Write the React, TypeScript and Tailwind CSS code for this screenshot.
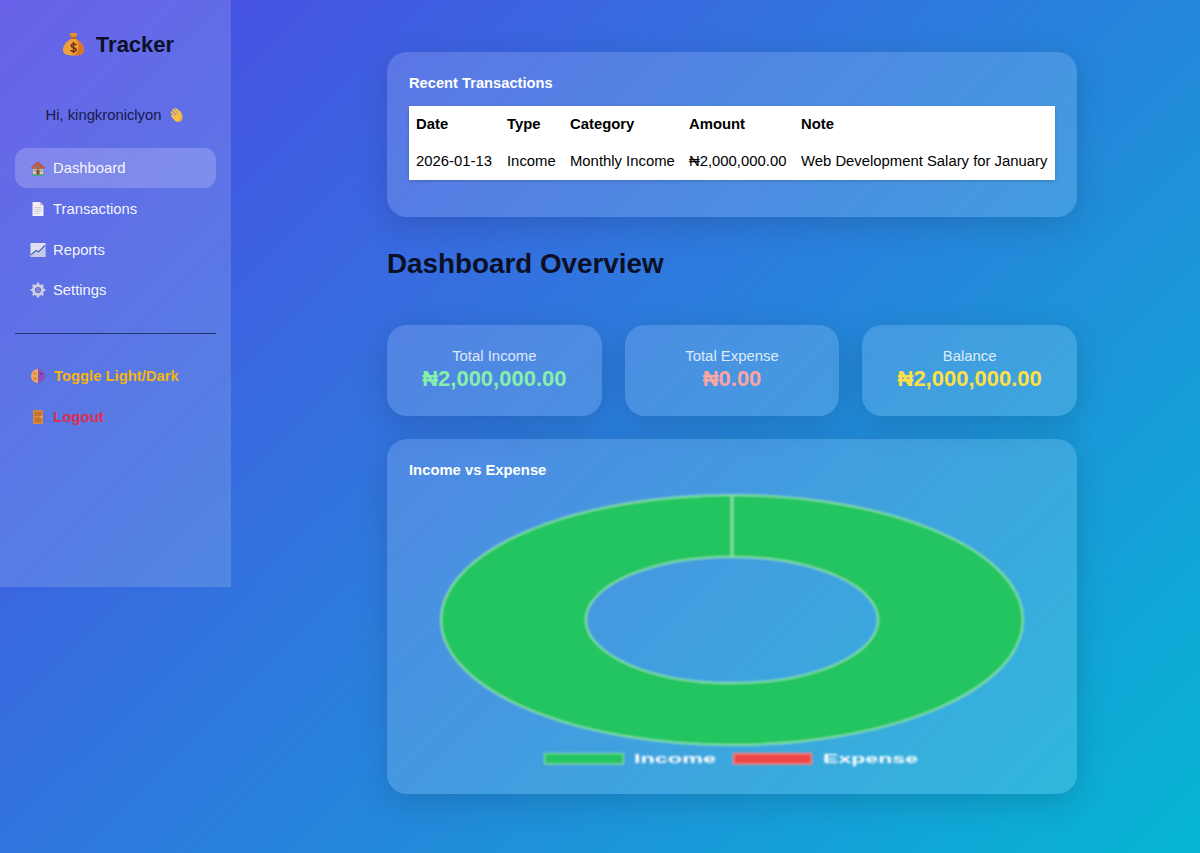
import React from "react";

const Bag = () => (
  <svg width="23" height="24" viewBox="2.4 1.6 19.2 20.8">
    <path d="M8.5 2.5 L15.5 2.5 L13.8 6.5 L10.2 6.5 Z" fill="#e8902c" />
    <rect x="9.6" y="6" width="4.8" height="1.8" rx=".9" fill="#a8591c" />
    <path d="M10 7.5 C5.5 10 2.8 14 2.8 17.2 C2.8 20.6 6 22 12 22 C18 22 21.2 20.6 21.2 17.2 C21.2 14 18.5 10 14 7.5 Z" fill="#f0a03a" />
    <path d="M14 7.5 C18.5 10 21.2 14 21.2 17.2 C21.2 20.6 18 22 12 22 C17 20 17.5 12 14 7.5Z" fill="#d9752b" />
    <path d="M14.2 12.6 C13.4 11.8 10 11.6 10 13.6 C10 15.8 14.3 14.6 14.3 16.9 C14.3 18.8 10.8 18.7 9.8 17.7 M12 10.8 V19.6" stroke="#6b3410" strokeWidth="1.3" fill="none" strokeLinecap="round" />
  </svg>
);
const Wave = () => (
  <svg width="16" height="16" viewBox="0 0 16 16">
    <path d="M2.6 5.2 L6.6 9.4 M4.2 2.8 L8.6 7.6 M6.6 1.7 L10.6 6.6" stroke="#f7c04a" strokeWidth="2" fill="none" strokeLinecap="round" />
    <path d="M9.6 2.6 C11 3.6 12.2 5.6 13 7.6 C14.2 10.6 13.4 13 11.4 14.2 C9.2 15.6 6.8 14.8 5.2 13 L2.4 9.4 C1.6 8.4 3 7.2 4 8.2 L5.6 9.8 L9.8 6 Z" fill="#f7c04a" />
    <path d="M9.2 13.8 C11.4 13.6 12.8 11.6 12.4 9" stroke="#e09a2c" strokeWidth="1" fill="none" />
  </svg>
);
const House = () => (
  <svg width="16" height="16" viewBox="0 0 16 16">
    <path d="M3 7 H13 V14.5 H3 Z" fill="#e8c9a0" />
    <path d="M8 1.2 L15.5 8 L13.8 8.6 L8 3.8 L2.2 8.6 L.5 8 Z" fill="#c4503c" />
    <path d="M8 3.8 L13 8 V9 H3 V8 Z" fill="#a9684a" />
    <rect x="6.4" y="9.5" width="3.2" height="5" fill="#8a4a2c" />
    <rect x="3.8" y="9.7" width="1.9" height="2" fill="#5fa8d8" />
    <rect x="10.3" y="9.7" width="1.9" height="2" fill="#5fa8d8" />
    <rect x="1.5" y="14.3" width="13" height="1.3" fill="#3fa66a" />
  </svg>
);
const Doc = () => (
  <svg width="16" height="16" viewBox="0 0 16 16">
    <path d="M2.5 1 H10 L13.5 4.5 V15 H2.5 Z" fill="#f1eff5" />
    <path d="M10 1 L13.5 4.5 H10 Z" fill="#c9c4d2" />
    <path d="M4.5 6.5 H11.5 M4.5 8.5 H11.5 M4.5 10.5 H11.5 M4.5 12.5 H9" stroke="#c9c4d4" strokeWidth=".9" />
  </svg>
);
const Chart = () => (
  <svg width="16" height="16" viewBox="0 0 16 16">
    <rect x=".5" y="1" width="15" height="14" fill="#dfe0ee" />
    <path d="M1 13 L6 8.5 L8.5 10 L15 3.5" stroke="#3f62b8" strokeWidth="1.3" fill="none" />
    <path d="M1 14.5 L6 10 L8.5 11.5 L15 5 V15 H1 Z" fill="#c6c9e2" />
  </svg>
);
const Gear = () => (
  <svg width="16" height="16" viewBox="0 0 16 16">
    <circle cx="8" cy="8" r="4.6" fill="none" stroke="#cfcde0" strokeWidth="3" />
    <path d="M8 .6 V2.6 M8 13.4 V15.4 M.6 8 H2.6 M13.4 8 H15.4 M2.8 2.8 L4.2 4.2 M11.8 11.8 L13.2 13.2 M13.2 2.8 L11.8 4.2 M4.2 11.8 L2.8 13.2" stroke="#cfcde0" strokeWidth="2.2" />
    <circle cx="8" cy="8" r="1.9" fill="#8d8dc8" />
  </svg>
);
const Half = () => (
  <svg width="16" height="16" viewBox="0 0 16 16">
    <path d="M8 1 A7 7 0 0 0 8 15 Z" fill="#f0a65a" />
    <path d="M8 1 A7 7 0 0 1 8 15 Z" fill="#8d4fb8" />
    <circle cx="4.5" cy="5.5" r="1.2" fill="#d9803c" />
    <circle cx="5" cy="10.5" r="1.5" fill="#d9803c" />
    <circle cx="11" cy="6" r="1.3" fill="#6f3a9c" />
  </svg>
);
const Door = () => (
  <svg width="16" height="16" viewBox="0 0 16 16">
    <rect x="3" y="1" width="10" height="14" fill="#d98a3c" />
    <rect x="4.5" y="2.5" width="7" height="4.5" fill="#c27530" />
    <rect x="4.5" y="8.5" width="7" height="5" fill="#c27530" />
    <rect x="10.5" y="7.3" width="1.5" height="1.2" fill="#f2d28a" />
  </svg>
);

const nav = [
  { label: "Dashboard", icon: <House />, active: true },
  { label: "Transactions", icon: <Doc /> },
  { label: "Reports", icon: <Chart /> },
  { label: "Settings", icon: <Gear /> },
];

const Stat = ({ label, value, color }: { label: string; value: string; color: string }) => (
  <div className="flex-1 h-[91px] rounded-[20px] bg-white/15 shadow-[0_8px_32px_rgba(0,0,0,0.15)] flex flex-col items-center pt-[22px]">
    <div className="text-[14.9px] leading-[19px] text-white/80">{label}</div>
    <div className={"text-[22px] leading-[25px] font-bold " + color}>{value}</div>
  </div>
);

const Donut = () => (
  <svg width="646" height="300" viewBox="0 0 646 300" className="block">
    <defs>
      <filter id="soft" x="-5%" y="-5%" width="110%" height="110%">
        <feGaussianBlur stdDeviation="0.8" />
      </filter>
    </defs>
    <g filter="url(#soft)">
      <path
        fillRule="evenodd"
        d="M32 143 A291 125 0 1 0 614 143 A291 125 0 1 0 32 143 Z M177 143 A146 63 0 1 1 469 143 A146 63 0 1 1 177 143 Z"
        fill="#22c55e"
        stroke="#86dfb0"
        strokeWidth="2"
      />
      <line x1="323" y1="18" x2="323" y2="80" stroke="#86dfa8" strokeWidth="2.8" />
      <rect x="135.5" y="276.5" width="79" height="10.5" fill="#22c55e" stroke="#77d3a8" strokeWidth="1.6" />
      <rect x="324.5" y="276.5" width="78" height="10.5" fill="#ef4444" stroke="#f08a8a" strokeWidth="1.6" />
      <text x="225" y="286" fill="#fff" fontSize="12.5" fontWeight="bold" textLength="82" lengthAdjust="spacingAndGlyphs">Income</text>
      <text x="414" y="286" fill="#fff" fontSize="12.5" fontWeight="bold" textLength="95" lengthAdjust="spacingAndGlyphs">Expense</text>
    </g>
  </svg>
);

export default function App() {
  return (
    <div className="min-h-[853px] flex items-start bg-[linear-gradient(135deg,#4f46e5,#06b6d4)] font-['Liberation_Sans',Arial,sans-serif]">
      <aside className="w-[231px] h-[587px] shrink-0 bg-white/15 px-[15px] pt-[29px]">
        <div className="flex items-center justify-center gap-[11px] h-[30px] text-[22px] font-bold text-[#0b1026] pl-[5px]">
          <Bag />
          <span>Tracker</span>
        </div>
        <div className="flex items-center justify-center gap-[8px] mt-[41px] h-[30px] text-[14.8px] text-[#141a4a]">
          <span>Hi, kingkroniclyon</span>
          <Wave />
        </div>
        <nav className="mt-[18px] flex flex-col gap-[0.8px]">
          {nav.map((n) => (
            <div
              key={n.label}
              className={
                "h-[40px] rounded-[12px] pl-[15px] flex items-center gap-[7px] text-[14.8px] text-white/95 " +
                (n.active ? "bg-white/20" : "")
              }
            >
              {n.icon}
              <span>{n.label}</span>
            </div>
          ))}
        </nav>
        <div className="mt-[22.4px] border-t border-[#27336f]" />
        <div className="mt-[22px] flex flex-col gap-[1px]">
          <div className="h-[40px] pl-[15px] flex items-center gap-[8px] text-[14.8px] font-bold text-[#f5b50f]">
            <Half />
            <span>Toggle Light/Dark</span>
          </div>
          <div className="h-[40px] pl-[15px] pt-[1px] flex items-center gap-[7px] text-[15px] font-bold text-[#dc2f4b]">
            <Door />
            <span>Logout</span>
          </div>
        </div>
      </aside>

      <main className="ml-[156px] w-[690px] pt-[52px] pb-[59px]">
        <section className="h-[165px] rounded-[20px] bg-white/15 shadow-[0_8px_32px_rgba(0,0,0,0.15)] px-[22px] pt-[22px]">
          <h3 className="text-[14.7px] leading-[18px] font-bold text-white">Recent Transactions</h3>
          <table className="mt-[14px] w-[646px] table-fixed bg-white text-[14.85px] text-black border-collapse shadow-[0_1px_3px_rgba(0,0,0,0.2)]">
            <colgroup>
              <col className="w-[91px]" />
              <col className="w-[63px]" />
              <col className="w-[119px]" />
              <col className="w-[112px]" />
              <col />
            </colgroup>
            <thead>
              <tr className="h-[37px] text-left">
                <th className="pl-[7px] font-bold">Date</th>
                <th className="pl-[7px] font-bold">Type</th>
                <th className="pl-[7px] font-bold">Category</th>
                <th className="pl-[7px] font-bold">Amount</th>
                <th className="pl-[7px] font-bold">Note</th>
              </tr>
            </thead>
            <tbody>
              <tr className="h-[37px] whitespace-nowrap">
                <td className="pl-[7px]">2026-01-13</td>
                <td className="pl-[7px]">Income</td>
                <td className="pl-[7px]">Monthly Income</td>
                <td className="pl-[7px]">₦2,000,000.00</td>
                <td className="pl-[7px]">Web Development Salary for January</td>
              </tr>
            </tbody>
          </table>
        </section>

        <h2 className="mt-[29px] h-[35px] text-[27.8px] leading-[35px] font-bold text-[#0b1026]">Dashboard Overview</h2>

        <div className="mt-[44px] flex gap-[23px]">
          <Stat label="Total Income" value="₦2,000,000.00" color="text-[#86efac]" />
          <Stat label="Total Expense" value="₦0.00" color="text-[#fca5a5]" />
          <Stat label="Balance" value="₦2,000,000.00" color="text-[#fde047]" />
        </div>

        <section className="mt-[23px] h-[355px] rounded-[20px] bg-white/15 shadow-[0_8px_32px_rgba(0,0,0,0.15)] px-[22px] pt-[22px]">
          <h3 className="text-[14.8px] leading-[18px] font-bold text-white">Income vs Expense</h3>
          <div className="mt-[-2px]">
            <Donut />
          </div>
        </section>
      </main>
    </div>
  );
}
